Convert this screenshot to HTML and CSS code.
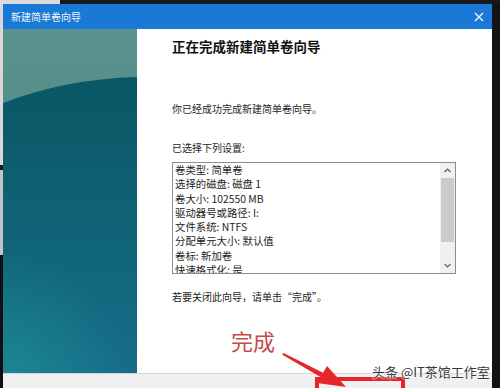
FILE: index.html
```html
<!DOCTYPE html>
<html lang="zh-CN">
<head>
    <meta charset="UTF-8">
    <meta name="viewport" content="width=device-width, initial-scale=1.0">
    <title>新建简单卷向导</title>
    <link rel="stylesheet" href="styles.css">
</head>
<body>
    <div class="desktop">
        <div class="window">
            <div class="titlebar">
                <span class="title">新建简单卷向导</span>
                <svg class="close" width="10" height="10" viewBox="0 0 10 10">
                    <path d="M1 1 L9 9 M9 1 L1 9" stroke="#ffffff" stroke-width="1.2" fill="none"/>
                </svg>
            </div>
            <div class="wizard">
                <svg class="banner" width="134" height="344" viewBox="0 0 134 344">
                    <defs>
                        <linearGradient id="sky" x1="0" y1="0" x2="0" y2="1">
                            <stop offset="0" stop-color="#5a928d"/>
                            <stop offset="1" stop-color="#44827e"/>
                        </linearGradient>
                        <linearGradient id="sea" x1="0" y1="0" x2="0" y2="1">
                            <stop offset="0" stop-color="#0a5665"/>
                            <stop offset="0.45" stop-color="#0f6274"/>
                            <stop offset="1" stop-color="#176e8a"/>
                        </linearGradient>
                        <radialGradient id="glow" cx="0" cy="344" r="120" gradientUnits="userSpaceOnUse">
                            <stop offset="0" stop-color="#1f9a9a" stop-opacity="0.55"/>
                            <stop offset="1" stop-color="#1f9a9a" stop-opacity="0"/>
                        </radialGradient>
                    </defs>
                    <rect width="134" height="344" fill="url(#sky)"/>
                    <path d="M0 74 Q 62 50 134 48 L134 344 L0 344 Z" fill="url(#sea)"/>
                    <rect width="134" height="344" fill="url(#glow)"/>
                </svg>
                <div class="content">
                    <h1>正在完成新建简单卷向导</h1>
                    <p class="intro">你已经成功完成新建简单卷向导。</p>
                    <p class="label">已选择下列设置:</p>
                    <div class="listbox">
                        <ul class="items">
                            <li>卷类型: 简单卷</li>
                            <li>选择的磁盘: 磁盘 1</li>
                            <li>卷大小: 102550 MB</li>
                            <li>驱动器号或路径: I:</li>
                            <li>文件系统: NTFS</li>
                            <li>分配单元大小: 默认值</li>
                            <li>卷标: 新加卷</li>
                            <li>快速格式化: 是</li>
                        </ul>
                        <div class="scrollbar">
                            <svg class="arrow" width="15" height="15" viewBox="0 0 15 15">
                                <path d="M4.5 9 L7.5 6 L10.5 9" stroke="#606060" stroke-width="1.2" fill="none"/>
                            </svg>
                            <div class="track"><div class="thumb"></div></div>
                            <svg class="arrow" width="15" height="15" viewBox="0 0 15 15">
                                <path d="M4.5 6 L7.5 9 L10.5 6" stroke="#606060" stroke-width="1.2" fill="none"/>
                            </svg>
                        </div>
                    </div>
                    <p class="hint">若要关闭此向导，请单击“完成”。</p>
                </div>
            </div>
            <div class="buttons"></div>
        </div>

        <!-- annotations drawn over the screenshot -->
        <div class="note">完成</div>
        <svg class="pointer" width="500" height="388" viewBox="0 0 500 388">
            <polygon points="282,354.5 283.5,353 323.1,372.8 320.9,377.2" fill="#e5262b"/>
            <polygon points="317,383 327,366 346,387" fill="#e5262b"/>
        </svg>
        <div class="highlight"></div>
        <div class="watermark">头条 @IT茶馆工作室</div>
    </div>
</body>
</html>
```

FILE: styles.css
```css
body {
    margin: 0;
    background-color: #111;
    font-family: "Noto Sans CJK SC", "Noto Sans", sans-serif;
}
.desktop {
    position: relative;
    width: 500px;
    height: 388px;
    overflow: hidden;
    padding: 4px 0 0 3px;
    box-sizing: border-box;
    background:
        linear-gradient(to right, #dcdcdc 60px, #15181c 60px) top left / 100% 4px no-repeat,
        linear-gradient(to bottom, #d8d8d8 0 165px, #1a1a1a 165px 170px, #c4c4c4 170px 255px, #101012 255px) top left / 3px 100% no-repeat,
        #121316;
}
.window {
    width: 489px;
    height: 384px;
    background-color: #fff;
    display: flex;
    flex-direction: column;
}
.titlebar {
    height: 25px;
    flex-shrink: 0;
    background-color: #1a78d6;
    display: flex;
    align-items: center;
    justify-content: space-between;
    padding: 0 8px 0 8px;
}
.title {
    color: #f2f6fb;
    font-size: 10px;
}
.close {
    display: block;
}
.wizard {
    height: 344px;
    flex-shrink: 0;
    display: flex;
}
.banner {
    display: block;
    flex-shrink: 0;
}
.content {
    flex-grow: 1;
    padding: 7px 36px 0 35px;
    color: #1e1e1e;
}
h1 {
    margin: 0;
    font-size: 13.5px;
    line-height: 20px;
    font-weight: bold;
    color: #111;
}
p {
    margin: 0;
    font-size: 10px;
    line-height: 14px;
}
.intro {
    margin-top: 46px;
}
.label {
    margin-top: 25px;
}
.listbox {
    margin-top: 7px;
    height: 112px;
    box-sizing: border-box;
    border: 1px solid #8a8d93;
    display: flex;
    overflow: hidden;
}
.items {
    list-style: none;
    margin: 0;
    padding: 0 0 0 2px;
    flex-grow: 1;
    font-size: 10.4px;
    line-height: 14.3px;
}
.scrollbar {
    width: 15px;
    flex-shrink: 0;
    background-color: #f0f0f0;
    display: flex;
    flex-direction: column;
}
.arrow {
    display: block;
    flex-shrink: 0;
}
.track {
    flex-grow: 1;
    padding: 0 1px 16px 1px;
}
.thumb {
    height: 64px;
    background-color: #cdcacf;
}
.hint {
    margin-top: 16px;
}
.buttons {
    flex-grow: 1;
    background-color: #f0f0f0;
    border-top: 1px solid #d6d6d6;
}
.note {
    position: absolute;
    left: 231px;
    top: 329px;
    font-size: 22px;
    line-height: 22px;
    color: #c8494b;
}
.pointer {
    position: absolute;
    left: 0;
    top: 0;
}
.highlight {
    position: absolute;
    left: 315px;
    top: 377px;
    width: 82px;
    height: 20px;
    border: 4px solid #e5262b;
}
.watermark {
    position: absolute;
    left: 372px;
    top: 364px;
    font-size: 13px;
    line-height: 16px;
    color: #3a3a3a;
    text-shadow: 0 0 2px #fff, 0 0 2px #fff, 0 0 1px #fff;
}
```
